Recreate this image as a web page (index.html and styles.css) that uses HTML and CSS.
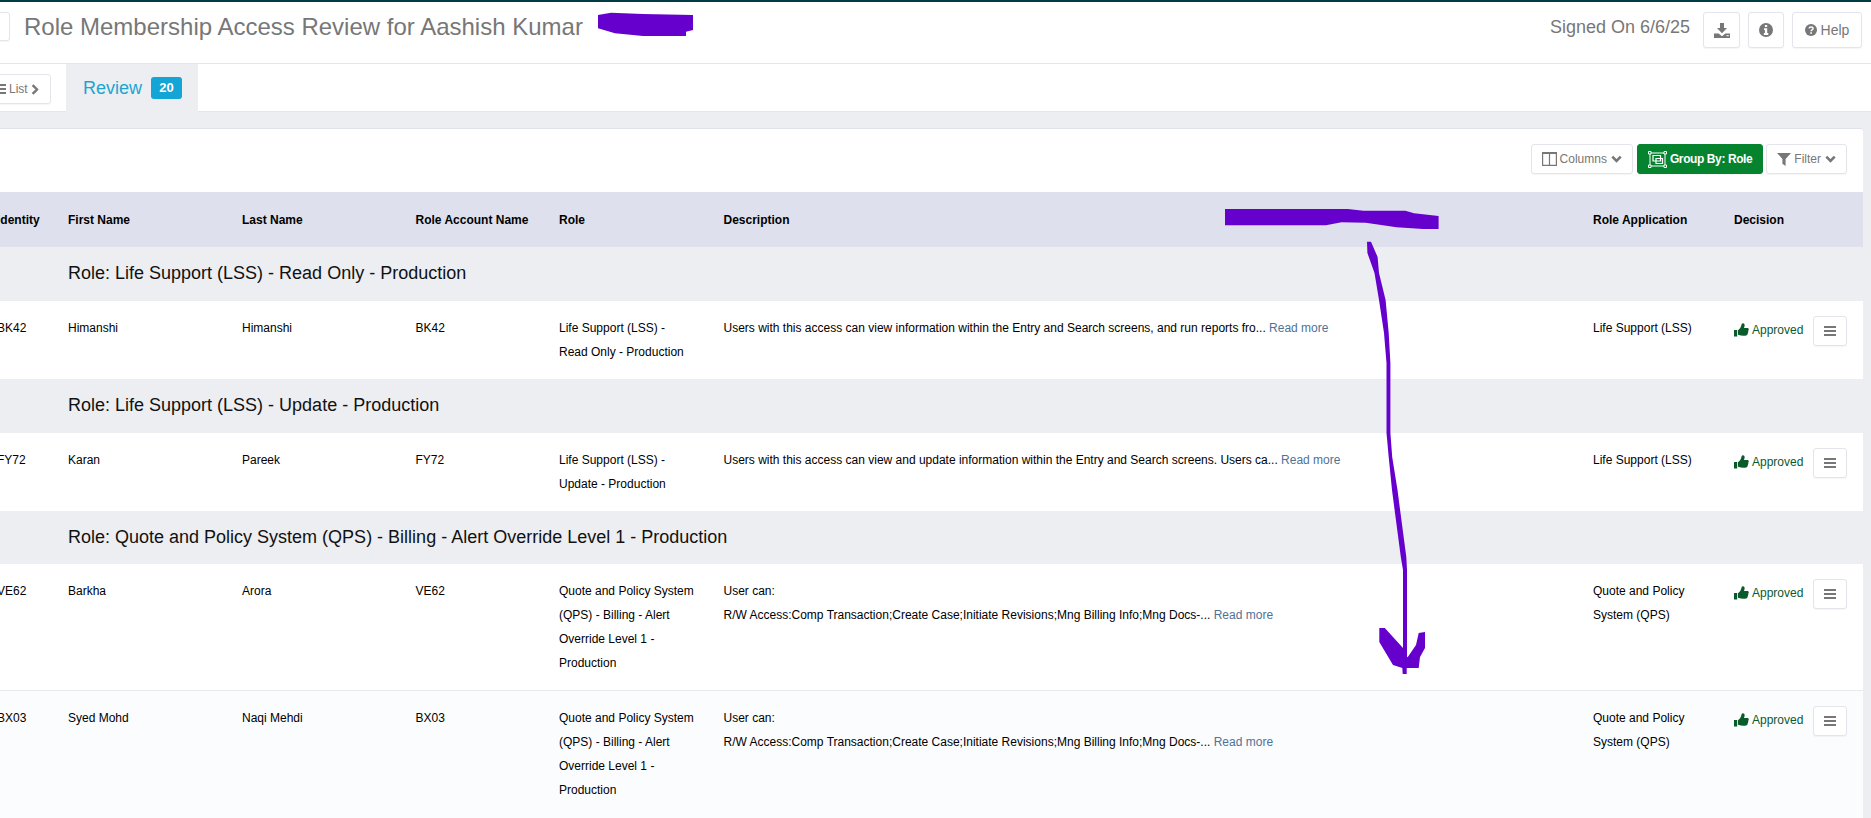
FILE: index.html
```html
<!DOCTYPE html>
<html lang="en">
<head>
<meta charset="utf-8">
<title>Role Membership Access Review</title>
<link rel="stylesheet" href="styles.css">
</head>
<body>
<svg class="sprite" width="0" height="0" aria-hidden="true">
  <symbol id="i-chev" viewBox="0 0 11 8"><path d="M1.300 1.600 5.500 5.800 9.700 1.600" fill="none" stroke="currentColor" stroke-width="2.600"/></symbol>
  <symbol id="i-thumb" viewBox="0 0 15 14"><path d="M0 7h3.200v6.600H0zM4 7.200c1.600-1 2.800-2.800 3.200-4.400C7.500 1.600 7.500.6 8.600.2c1.800-.3 2.300 1.500 1.900 3l-.5 1.800h3.400c1 0 1.500.9 1.300 1.700-.1.500-.3.800-.5 1 .3.500.2 1.200-.2 1.600.2.600 0 1.200-.5 1.500.1.900-.5 1.500-1.400 1.700-2.500.5-5 .3-8.100-.8z" fill="currentColor"/></symbol>
  <symbol id="i-bars" viewBox="0 0 12 10"><path d="M0 0h12v2H0zM0 4h12v2H0zM0 8h12v2H0z" fill="currentColor"/></symbol>
</svg>

<header class="topbar">
  <button class="btn btn-cut" aria-label="Back"></button>
  <h1 class="title">Role Membership Access Review for Aashish Kumar</h1>
  <div class="top-right">
    <span class="signed">Signed On 6/6/25</span>
    <button class="btn btn-icon" aria-label="Download">
      <svg class="ico-dl" viewBox="0 0 16 15"><path d="M6 0h4v5h3L8 10.200 3 5h3zM0 10.500h4.600L8 13.200l3.400-2.700H16V15H0z" fill="currentColor"/><path d="M12.500 12.700h2.300" stroke="#fff" stroke-width="1"/></svg>
    </button>
    <button class="btn btn-icon btn-info" aria-label="Information">
      <svg class="ico-info" viewBox="0 0 14 14"><path fill-rule="evenodd" d="M7 0a7 7 0 1 0 0 14A7 7 0 0 0 7 0zM5.900 1.900h2.300v2H5.900zM5 5.200h3.200v4.900h1.100v1.800H4.800v-1.800h1.100V7H5z" fill="currentColor"/></svg>
    </button>
    <button class="btn btn-help">
      <svg class="ico-help" viewBox="0 0 14 14"><circle cx="7" cy="7" r="7" fill="currentColor"/><path d="M4.700 5.200C5 3.900 6 3.400 7.100 3.400c1.300 0 2.300.8 2.300 1.900 0 1.700-2.200 1.600-2.300 3.200" fill="none" stroke="#fff" stroke-width="1.700"/><path d="M6.100 9.500h2v1.800h-2z" fill="#fff"/></svg>
      Help
    </button>
  </div>
</header>

<nav class="tabs">
  <button class="btn btn-list"><svg class="ico-bars" viewBox="0 0 12 10"><use href="#i-bars"/></svg>List<svg class="ico-listchev" viewBox="0 0 8 11"><path d="M1.600 1.200 6 5.500 1.600 9.800" fill="none" stroke="currentColor" stroke-width="2.400"/></svg></button>
  <div class="tab-active">Review <span class="badge">20</span></div>
</nav>

<main class="content">
  <section class="panel">
    <div class="toolbar">
      <button class="btn btn-tool">
        <svg class="ico-cols" viewBox="0 0 15 14"><path d="M.6.6h13.800v12.800H.6zM7.500.6v12.800" fill="none" stroke="currentColor" stroke-width="1.200"/><path d="M0 0h15v2H0z" fill="currentColor"/></svg>
        Columns
        <svg class="ico-chev"><use href="#i-chev"/></svg>
      </button>
      <button class="btn btn-group">
        <svg class="ico-group" viewBox="0 0 19 17" fill="none" stroke="#fff"><path d="M2 2h15v13H2z"/><path d="M5 4.500h7.500v5.500H5zM8 7.500h6.500v5H8z" stroke-width="1.200"/><path d="M.5.500h2.500v2.500H.5zM16 .500h2.500v2.500H16zM.5 14h2.500v2.500H.5zM16 14h2.500v2.500H16z" fill="#05832e"/></svg>
        Group By: Role
      </button>
      <button class="btn btn-tool btn-filter">
        <svg class="ico-filter" viewBox="0 0 14 13"><path d="M0 0h14L8.600 6v7L5.400 10.800V6z" fill="currentColor"/></svg>
        Filter
        <svg class="ico-chev"><use href="#i-chev"/></svg>
      </button>
    </div>

    <table class="grid">
      <colgroup>
        <col class="c-id"><col class="c-first"><col class="c-last"><col class="c-acct"><col class="c-role"><col class="c-desc"><col class="c-app"><col class="c-dec">
      </colgroup>
      <thead>
        <tr><th>Identity</th><th>First Name</th><th>Last Name</th><th>Role Account Name</th><th>Role</th><th>Description</th><th>Role Application</th><th>Decision</th></tr>
      </thead>
      <tbody>
        <tr class="group"><td></td><td colspan="7">Role: Life Support (LSS) - Read Only - Production</td></tr>
        <tr>
          <td>BK42</td><td>Himanshi</td><td>Himanshi</td><td>BK42</td>
          <td>Life Support (LSS) - Read Only - Production</td>
          <td>Users with this access can view information within the Entry and Search screens, and run reports fro... <a class="more" href="#">Read more</a></td>
          <td>Life Support (LSS)</td>
          <td><div class="decision"><span class="approved"><svg class="ico-thumb"><use href="#i-thumb"/></svg>Approved</span><button class="btn btn-menu" aria-label="Menu"><svg class="ico-menu"><use href="#i-bars"/></svg></button></div></td>
        </tr>
        <tr class="group"><td></td><td colspan="7">Role: Life Support (LSS) - Update - Production</td></tr>
        <tr>
          <td>FY72</td><td>Karan</td><td>Pareek</td><td>FY72</td>
          <td>Life Support (LSS) - Update - Production</td>
          <td>Users with this access can view and update information within the Entry and Search screens. Users ca... <a class="more" href="#">Read more</a></td>
          <td>Life Support (LSS)</td>
          <td><div class="decision"><span class="approved"><svg class="ico-thumb"><use href="#i-thumb"/></svg>Approved</span><button class="btn btn-menu" aria-label="Menu"><svg class="ico-menu"><use href="#i-bars"/></svg></button></div></td>
        </tr>
        <tr class="group group-short"><td></td><td colspan="7">Role: Quote and Policy System (QPS) - Billing - Alert Override Level 1 - Production</td></tr>
        <tr class="ruled">
          <td>VE62</td><td>Barkha</td><td>Arora</td><td>VE62</td>
          <td>Quote and Policy System (QPS) - Billing - Alert Override Level 1 - Production</td>
          <td>User can:<br>R/W Access:Comp Transaction;Create Case;Initiate Revisions;Mng Billing Info;Mng Docs-... <a class="more" href="#">Read more</a></td>
          <td>Quote and Policy System (QPS)</td>
          <td><div class="decision"><span class="approved"><svg class="ico-thumb"><use href="#i-thumb"/></svg>Approved</span><button class="btn btn-menu" aria-label="Menu"><svg class="ico-menu"><use href="#i-bars"/></svg></button></div></td>
        </tr>
        <tr class="alt">
          <td>BX03</td><td>Syed Mohd</td><td>Naqi Mehdi</td><td>BX03</td>
          <td>Quote and Policy System (QPS) - Billing - Alert Override Level 1 - Production</td>
          <td>User can:<br>R/W Access:Comp Transaction;Create Case;Initiate Revisions;Mng Billing Info;Mng Docs-... <a class="more" href="#">Read more</a></td>
          <td>Quote and Policy System (QPS)</td>
          <td><div class="decision"><span class="approved"><svg class="ico-thumb"><use href="#i-thumb"/></svg>Approved</span><button class="btn btn-menu" aria-label="Menu"><svg class="ico-menu"><use href="#i-bars"/></svg></button></div></td>
        </tr>
      </tbody>
    </table>
  </section>
</main>

<svg class="scribble" viewBox="0 0 1871 818" aria-hidden="true">
  <polygon points="598,15 611,12.700 643,14 693,15 693,30 686,31.700 686,36 643,36 615,33.300 598,28.300"/>
  <polygon points="1225,209 1348,209 1363.500,210.700 1405.500,210.700 1414,213.300 1438.600,216 1438.600,229 1423,229 1396.600,227.300 1365.700,222.700 1341.400,222.300 1326,225.300 1225,225.300"/>
  <polygon points="1367,241.700 1367.400,253 1374.500,273 1379,300 1384,333 1386.500,363 1386.500,433 1388.700,457 1392,490 1395,513 1400.800,557 1403,570 1403,648 1384.800,628 1379.300,628 1379.300,642 1393,665 1402.300,668 1402.700,674 1406.700,674 1406.700,668 1418.700,668 1420,657 1425,648 1425,632 1418.700,633 1416,645 1407.800,657 1407,657 1407,570 1406.300,557 1400.500,513 1397.500,490 1392.200,457 1390.400,433 1390.400,363 1388.700,333 1385.600,300 1379,273 1377.600,257 1371,241.700"/>
</svg>
</body>
</html>
```

FILE: styles.css
```css
* { box-sizing: border-box; }
html, body { margin: 0; height: 818px; overflow: hidden; }
body {
  position: relative;
  background: #edeef2;
  font-family: "Liberation Sans", Arial, sans-serif;
  font-size: 12px;
  color: #000;
}
.sprite { position: absolute; }

.btn {
  display: inline-flex;
  align-items: center;
  justify-content: center;
  margin: 0;
  padding: 0;
  background: #fff;
  border: 1px solid #e3e5ea;
  border-radius: 3px;
  box-shadow: 0 1px 1px rgba(0, 0, 0, .04);
  color: #777;
  font: inherit;
}

/* top header */
.topbar {
  display: flex;
  align-items: flex-start;
  height: 64px;
  padding-top: 10px;
  background: #fff;
  border-top: 2px solid #003b46;
  border-bottom: 1px solid #e4e6ea;
}
.btn-cut { width: 30px; height: 29px; margin-left: -20px; flex: none; }
.title {
  margin: 0 0 0 14px;
  font-size: 24px;
  font-weight: 400;
  line-height: 30px;
  color: #777;
}
.top-right { display: flex; align-items: flex-start; margin-left: auto; padding-right: 9px; }
.signed { font-size: 18px; line-height: 30px; color: #777; margin-right: 13px; }
.btn-icon { width: 37px; height: 36px; margin-right: 8px; }
.btn-info { width: 36px; }
.btn-help { width: 70px; height: 36px; font-size: 14px; gap: 4px; }
.ico-dl { width: 16px; height: 15px; }
.ico-info { width: 14px; height: 14px; }
.ico-help { width: 12px; height: 12px; }

/* tabs */
.tabs {
  display: flex;
  height: 48px;
  background: #fff;
  border-bottom: 1px solid #e4e6ea;
}
.btn-list {
  width: 66px;
  height: 30px;
  margin: 10px 15px 0 -15px;
  flex: none;
  justify-content: flex-start;
  padding-left: 8px;
}
.ico-bars { width: 12px; height: 10px; margin-right: 3px; }
.ico-listchev { width: 8px; height: 11px; margin-left: 3px; }
.tab-active {
  display: flex;
  align-items: center;
  width: 132px;
  height: 48px;
  padding-left: 17px;
  background: #edeef2;
  font-size: 18px;
  color: #1ba5d1;
}
.badge {
  width: 31px;
  height: 22px;
  margin-left: 9px;
  border-radius: 3px;
  background: #12a5d5;
  color: #fff;
  font-size: 13px;
  font-weight: 700;
  line-height: 22px;
  text-align: center;
}

/* panel */
.content { padding: 16px 8px 0 0; }
.panel {
  margin-left: -18px;
  width: 1881px;
  background: #fff;
  border-top: 1px solid #dfe2ea;
  border-radius: 0 3px 0 0;
}
.toolbar {
  display: flex;
  justify-content: flex-end;
  gap: 4px;
  height: 63px;
  padding: 15px 16px 0 0;
}
.toolbar .btn { height: 30px; padding: 0 10px; gap: 3px; }
.toolbar .btn-filter { margin-left: -1px; }
.toolbar .btn-group {
  background: #05832e;
  border-color: #05832e;
  color: #fff;
  font-weight: 700;
  letter-spacing: -.4px;
}
.ico-cols { width: 15px; height: 14px; }
.ico-chev { width: 11px; height: 8px; margin-left: 1px; }
.ico-group { width: 19px; height: 17px; }
.ico-filter { width: 14px; height: 13px; }

/* table */
.grid { width: 1881px; table-layout: fixed; border-collapse: collapse; }
.c-id { width: 71px; }
.c-first { width: 174px; }
.c-last { width: 173.5px; }
.c-acct { width: 143.5px; }
.c-role { width: 164.5px; }
.c-desc { width: 869.5px; }
.c-app { width: 141px; }
.c-dec { width: 144px; }
.grid th {
  height: 55px;
  padding: 0 15px;
  background: #dee1ed;
  font-weight: 700;
  line-height: 24px;
  text-align: left;
}
.grid td {
  padding: 15px;
  line-height: 24px;
  vertical-align: top;
}
.grid tbody td:nth-child(5) { padding-right: 13.5px; }
.grid tbody td:nth-child(8) { padding-right: 16px; }
.grid .group td {
  height: 54px;
  padding: 15px 15px 16px;
  background: #edeef2;
  font-size: 18px;
  line-height: 23px;
  color: #111;
}
.grid .group-short td { height: 53px; padding-bottom: 15px; }
.ruled td { border-bottom: 1px solid #e8eaee; }
.grid .alt td { padding-bottom: 24px; background: #fbfcfe; }
.more { color: #4f7296; text-decoration: none; }

.decision { display: flex; align-items: flex-start; justify-content: space-between; }
.approved {
  display: inline-flex;
  align-items: center;
  gap: 3px;
  margin-top: 2px;
  color: #0b5a2b;
}
.ico-thumb { width: 15px; height: 14px; }
.btn-menu { width: 34px; height: 30px; flex: none; }
.ico-menu { width: 12px; height: 10px; }

/* hand-drawn redaction marks lying over the page */
.scribble {
  position: absolute;
  left: 0;
  top: 0;
  width: 1871px;
  height: 818px;
  pointer-events: none;
}
.scribble polygon { fill: #6600cc; }
```
